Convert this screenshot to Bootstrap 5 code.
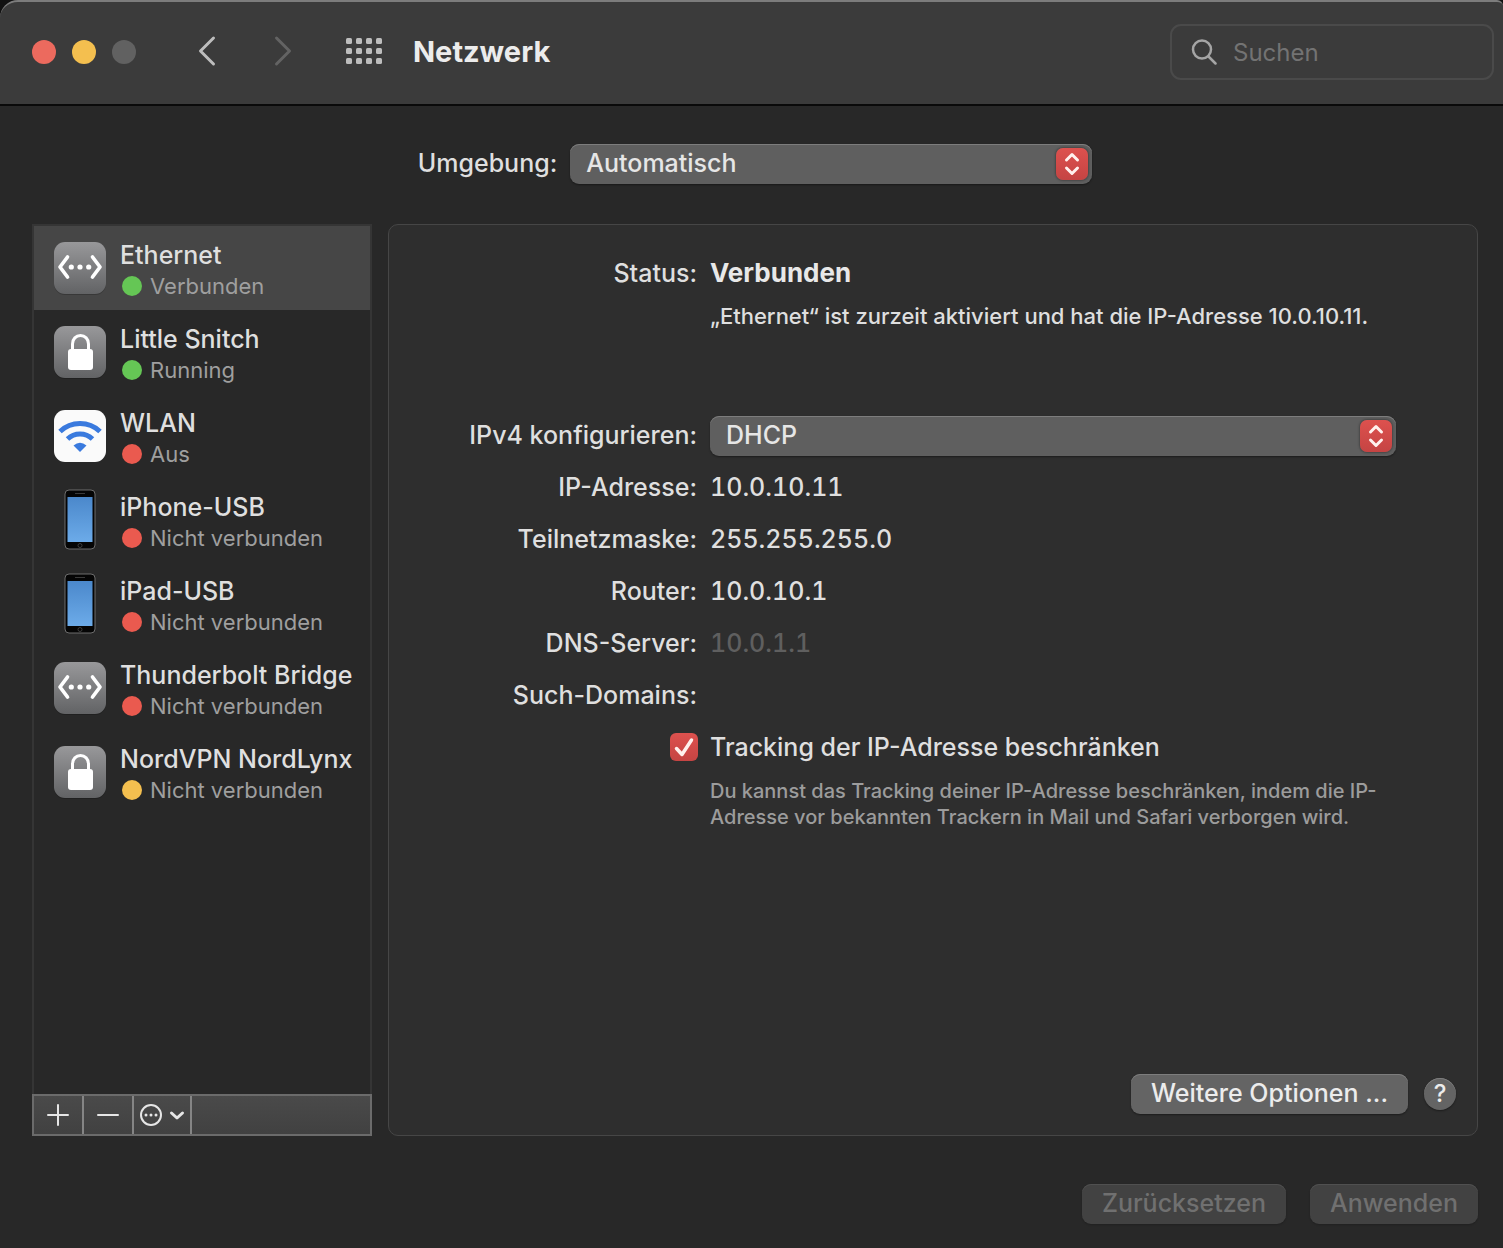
<!DOCTYPE html>
<html lang="de" data-bs-theme="dark">
<head>
<meta charset="utf-8">
<meta name="viewport" content="width=device-width, initial-scale=1">
<title>Netzwerk</title>
<link href="https://cdn.jsdelivr.net/npm/bootstrap@5.3.0/dist/css/bootstrap.min.css" rel="stylesheet">
<style>
body{background:#282828;color:#dfdfdf;font-family:Inter,"Liberation Sans",sans-serif;font-size:25px;font-weight:500;line-height:32px}
button,select,input{font-weight:500}
.titlebar{height:106px;background:#3b3b3b;border-top:2px solid #7c7c7c;border-bottom:2px solid #0a0a0a;border-radius:18px 6px 0 0;padding:0 9px 2px 32px}
.titlewrap{background:#111}
.light{width:24px;height:24px;border:0;padding:0;border-radius:50%}
.light-close{background:#ec6a5e}.light-min{background:#f4bf4f}.light-zoom{background:#616161}
.plain{background:none;border:0;padding:0 0 2px;display:flex;color:#bdbdbd}
.nav-back{margin-left:60px}.nav-fwd{margin-left:54px;color:#636363}.nav-all{margin-left:52px}
.titlebar h1{font-size:29px;font-weight:700;line-height:36px;color:#ececec;margin:0 0 0 30px}
.searchbox{width:324px;height:56px;border:2px solid #4a4a4a;border-radius:11px;padding:0 19px;color:#a5a5a5}
.searchbox input{background:none;border:0;outline:0;min-width:0;color:#dfdfdf;padding:2px 0 0;font-size:24px;font-weight:400}
.searchbox input::placeholder{color:#737373;opacity:1}
.content{padding:38px 25px 24px 32px}
.picker{position:relative}
.picker select{appearance:none;width:100%;height:40px;border:0;border-radius:9px;background:#5f5f5f;box-shadow:inset 0 1px #7d7d7d,0 1px 2px #0006;color:#e6e6e6;padding:0 48px 2px 16px;display:block}
.stepper{position:absolute;right:4px;top:4px;width:32px;height:32px;border-radius:7px;background:linear-gradient(#dd514e,#c54443);box-shadow:0 0 2px 1px #0004;pointer-events:none}
.stepper svg{display:block}
.env{width:522px}
.envlabel{padding:0 13px 2px 0}
.side{width:340px}
.services{border:2px solid #353535;border-bottom:0}
.service{height:84px;padding:3px 0 0 20px;gap:14px;color:inherit;text-decoration:none;white-space:nowrap}
.service.active{background:#464646}
.service svg{width:52px;height:62px;flex:none;margin-bottom:4px}
.state{font-size:22px;font-weight:400;line-height:30px;color:#9f9f9f;gap:8px}
.dot{width:20px;height:20px;border-radius:50%;margin-left:2px}
.green{background:#65c655}.red{background:#ea5a4f}.yellow{background:#f4bf4f}
.tools{height:42px;border:2px solid #6b6b6b;background:linear-gradient(#4a4a4a,#414141)}
.tools button{width:50px;background:none;border:0;border-right:2px solid #858585;padding:0;color:#e6e6e6;display:flex;align-items:center;justify-content:center}
.tools .more{width:58px;gap:7px}
.pane{background:#2e2e2e;border:1px solid #464646;border-radius:10px;padding:22px 21px 21px 0}
.line{display:grid;grid-template-columns:308px minmax(0,1fr);column-gap:13px;min-height:52px;align-items:center}
.line>:first-child{justify-self:end}
.line .picker{margin:0 60px -2px 0}
.line strong{color:#e8e8e8;font-size:26px;font-weight:700}
.note{font-size:22px;line-height:34px;min-height:34px}
.gap-block{margin-bottom:77px}
.gap-block~.line{padding-bottom:2px}
.figures{font-variant-numeric:tabular-nums}
.faded{color:#5f5f5f}
.hint{font-size:20px;line-height:26px;color:#9c9c9c;margin-top:4px}
.tick{appearance:none;width:28px;height:28px;margin:0;border-radius:6px;background:linear-gradient(#dd514e,#c54443)}
.tickwrap{position:relative;display:flex;margin-right:-1px}
.tickwrap svg{position:absolute;left:0;top:0;pointer-events:none}
.push{height:40px;border:0;border-radius:9px;background:#646464;box-shadow:inset 0 1px #7d7d7d,0 1px 2px #0006;color:#ececec;padding:0 20px 2px;white-space:nowrap}
.push:disabled{background:#424242;box-shadow:inset 0 1px #505050,0 1px 2px #0003;color:#707070}
.help{width:32px;height:32px;border:0;border-radius:50%;background:#646464;box-shadow:inset 0 1px #7d7d7d,0 1px 2px #0006;color:#ececec;padding:0;font-size:24px;line-height:32px}
.closing{margin-top:48px;gap:24px}
</style>
<script src="https://cdn.jsdelivr.net/npm/bootstrap@5.3.0/dist/js/bootstrap.bundle.min.js"></script>
</head>
<body class="min-vh-100 d-flex flex-column">
<svg width="0" height="0" class="position-absolute" aria-hidden="true">
<defs>
<linearGradient id="g-steel" x2="0" y2="1"><stop stop-color="#98989a"/><stop offset="1" stop-color="#626365"/></linearGradient>
<linearGradient id="g-screen" x2="0" y2="1"><stop stop-color="#4b88cb"/><stop offset="1" stop-color="#6cabe9"/></linearGradient>
</defs>
<symbol id="i-eth" viewBox="0 0 52 62"><rect y="6" width="52" height="52" rx="11" fill="#0003"/><rect y="5" width="52" height="52" rx="11" fill="url(#g-steel)"/><path d="M13.500 20 6 30l7.500 10M38.500 20 46 30l-7.500 10" fill="none" stroke="#fff" stroke-width="3.700" stroke-linecap="round" stroke-linejoin="round"/><g fill="#fff"><circle cx="17.300" cy="30" r="2.600"/><circle cx="26" cy="30" r="2.600"/><circle cx="34.700" cy="30" r="2.600"/></g></symbol>
<symbol id="i-lock" viewBox="0 0 52 62"><rect y="6" width="52" height="52" rx="11" fill="#0003"/><rect y="5" width="52" height="52" rx="11" fill="url(#g-steel)"/><path d="M18.500 29v-6c0-5 3.500-8.500 8-8.500s8 3.500 8 8.500v6" fill="none" stroke="#fff" stroke-width="3"/><rect x="14" y="28" width="25" height="21" rx="3" fill="#fff"/></symbol>
<symbol id="i-wifi" viewBox="0 0 52 62"><rect y="5" width="52" height="52" rx="11" fill="#fafafa"/><g fill="none" stroke="#3a7ade" stroke-width="5"><path d="M6 26.500a29 29 0 0 1 40 0"/><path d="M13.500 34a18 18 0 0 1 25 0"/></g><path d="M19.500 40.500q6.500-5.500 13 0L26 47z" fill="#3a7ade"/></symbol>
<symbol id="i-phone" viewBox="0 0 52 62"><rect x="11" y="1" width="30" height="59" rx="4" fill="#050505" stroke="#6d6d6d"/><rect x="13.500" y="8" width="25" height="45" fill="url(#g-screen)"/><path d="M21 4.500h10" stroke="#3a3a3a"/><circle cx="26" cy="56.500" r="2" fill="none" stroke="#3c3c3c"/></symbol>
<symbol id="i-step" viewBox="0 0 32 32"><path d="m10.500 12 5.500-5.500 5.500 5.500M10.500 20l5.500 5.500 5.500-5.500" fill="none" stroke="#fff1ee" stroke-width="3" stroke-linecap="round" stroke-linejoin="round"/></symbol>
</svg>

<div class="titlewrap">
<header class="titlebar d-flex align-items-center">
  <div class="d-flex gap-3">
    <button class="light light-close" aria-label="Schließen"></button>
    <button class="light light-min" aria-label="Minimieren"></button>
    <button class="light light-zoom" aria-label="Zoomen" disabled></button>
  </div>
  <button class="plain nav-back" aria-label="Zurück"><svg width="22" height="32" viewBox="0 0 22 32" fill="none" stroke="currentColor" stroke-width="3" stroke-linecap="round" stroke-linejoin="round"><path d="M17.500 3 4.500 16l13 13"/></svg></button>
  <button class="plain nav-fwd" aria-label="Vorwärts"><svg width="22" height="32" viewBox="0 0 22 32" fill="none" stroke="currentColor" stroke-width="3" stroke-linecap="round" stroke-linejoin="round"><path d="m4.500 3 13 13-13 13"/></svg></button>
  <button class="plain nav-all" aria-label="Alle einblenden"><svg width="37" height="26" viewBox="0 0 37 26" fill="currentColor"><g id="dots"><rect width="6" height="6" rx="1.500"/><rect x="10" width="6" height="6" rx="1.500"/><rect x="20" width="6" height="6" rx="1.500"/><rect x="30" width="6" height="6" rx="1.500"/></g><use href="#dots" y="10"/><use href="#dots" y="20"/></svg></button>
  <h1>Netzwerk</h1>
  <label class="searchbox d-flex align-items-center ms-auto">
    <svg class="flex-shrink-0 me-3" width="26" height="26" viewBox="0 0 26 26" fill="none" stroke="currentColor" stroke-width="2.500" stroke-linecap="round"><circle cx="11" cy="10.500" r="9"/><path d="m17.500 17.500 7 7"/></svg>
    <input class="flex-grow-1" type="search" placeholder="Suchen" aria-label="Suchen">
  </label>
</header>
</div>

<main class="content flex-grow-1 d-flex flex-column">
  <div class="d-flex justify-content-center align-items-center mb-4 pb-3">
    <label for="env" class="envlabel">Umgebung:</label>
    <div class="picker env"><select id="env"><option>Automatisch</option></select><span class="stepper"><svg width="32" height="32"><use href="#i-step"/></svg></span></div>
  </div>

  <div class="d-flex gap-3 flex-grow-1">
    <aside class="side flex-shrink-0 d-flex flex-column">
      <nav class="services flex-grow-1" aria-label="Dienste">
        <a href="#" class="service active d-flex align-items-center"><svg><use href="#i-eth"/></svg><span>Ethernet<span class="state d-flex align-items-center"><i class="dot green"></i>Verbunden</span></span></a>
        <a href="#" class="service d-flex align-items-center"><svg><use href="#i-lock"/></svg><span>Little Snitch<span class="state d-flex align-items-center"><i class="dot green"></i>Running</span></span></a>
        <a href="#" class="service d-flex align-items-center"><svg><use href="#i-wifi"/></svg><span>WLAN<span class="state d-flex align-items-center"><i class="dot red"></i>Aus</span></span></a>
        <a href="#" class="service d-flex align-items-center"><svg><use href="#i-phone"/></svg><span>iPhone-USB<span class="state d-flex align-items-center"><i class="dot red"></i>Nicht verbunden</span></span></a>
        <a href="#" class="service d-flex align-items-center"><svg><use href="#i-phone"/></svg><span>iPad-USB<span class="state d-flex align-items-center"><i class="dot red"></i>Nicht verbunden</span></span></a>
        <a href="#" class="service d-flex align-items-center"><svg><use href="#i-eth"/></svg><span>Thunderbolt Bridge<span class="state d-flex align-items-center"><i class="dot red"></i>Nicht verbunden</span></span></a>
        <a href="#" class="service d-flex align-items-center"><svg><use href="#i-lock"/></svg><span>NordVPN NordLynx<span class="state d-flex align-items-center"><i class="dot yellow"></i>Nicht verbunden</span></span></a>
      </nav>
      <div class="tools d-flex">
        <button aria-label="Hinzufügen"><svg width="22" height="22" viewBox="0 0 22 22" stroke="currentColor" stroke-width="2" stroke-linecap="round"><path d="M11 1v20M1 11h20"/></svg></button>
        <button aria-label="Entfernen"><svg width="22" height="22" viewBox="0 0 22 22" stroke="currentColor" stroke-width="2" stroke-linecap="round"><path d="M1 11h20"/></svg></button>
        <button class="more" aria-label="Aktionen"><svg width="22" height="22" viewBox="0 0 22 22"><circle cx="11" cy="11" r="10" fill="none" stroke="currentColor" stroke-width="2"/><g fill="currentColor"><circle cx="6" cy="11" r="1.500"/><circle cx="11" cy="11" r="1.500"/><circle cx="16" cy="11" r="1.500"/></g></svg><svg width="16" height="12" viewBox="0 0 16 12" fill="none" stroke="currentColor" stroke-width="3" stroke-linecap="round" stroke-linejoin="round"><path d="m2.500 4 5.500 5 5.500-5"/></svg></button>
      </div>
    </aside>

    <section class="pane flex-grow-1 d-flex flex-column">
      <div class="line"><span>Status:</span><strong>Verbunden</strong></div>
      <div class="line note gap-block"><span></span><span>„Ethernet“ ist zurzeit aktiviert und hat die IP-Adresse 10.0.10.11.</span></div>
      <div class="line"><label for="ipv4">IPv4 konfigurieren:</label><div class="picker"><select id="ipv4"><option>DHCP</option></select><span class="stepper"><svg width="32" height="32"><use href="#i-step"/></svg></span></div></div>
      <div class="line"><span>IP-Adresse:</span><span class="figures">10.0.10.11</span></div>
      <div class="line"><span>Teilnetzmaske:</span><span class="figures">255.255.255.0</span></div>
      <div class="line"><span>Router:</span><span class="figures">10.0.10.1</span></div>
      <div class="line"><span>DNS-Server:</span><span class="figures faded">10.0.1.1</span></div>
      <div class="line"><span>Such-Domains:</span><span></span></div>
      <div class="line"><span class="tickwrap"><input class="tick" type="checkbox" id="track" checked><svg width="28" height="28" viewBox="0 0 28 28" fill="none" stroke="#fff1ee" stroke-width="3.500" stroke-linecap="round" stroke-linejoin="round"><path d="m6.500 15.500 5.500 6L21.500 7"/></svg></span><label for="track">Tracking der IP-Adresse beschränken</label></div>
      <div class="line hint"><span></span><span>Du kannst das Tracking deiner IP-Adresse beschränken, indem die IP-<br>Adresse vor bekannten Trackern in Mail und Safari verborgen wird.</span></div>
      <div class="d-flex justify-content-end align-items-center gap-3 mt-auto">
        <button class="push">Weitere Optionen ...</button>
        <button class="help" aria-label="Hilfe">?</button>
      </div>
    </section>
  </div>

  <footer class="closing d-flex justify-content-end">
    <button class="push" disabled>Zurücksetzen</button>
    <button class="push" disabled>Anwenden</button>
  </footer>
</main>
</body>
</html>
